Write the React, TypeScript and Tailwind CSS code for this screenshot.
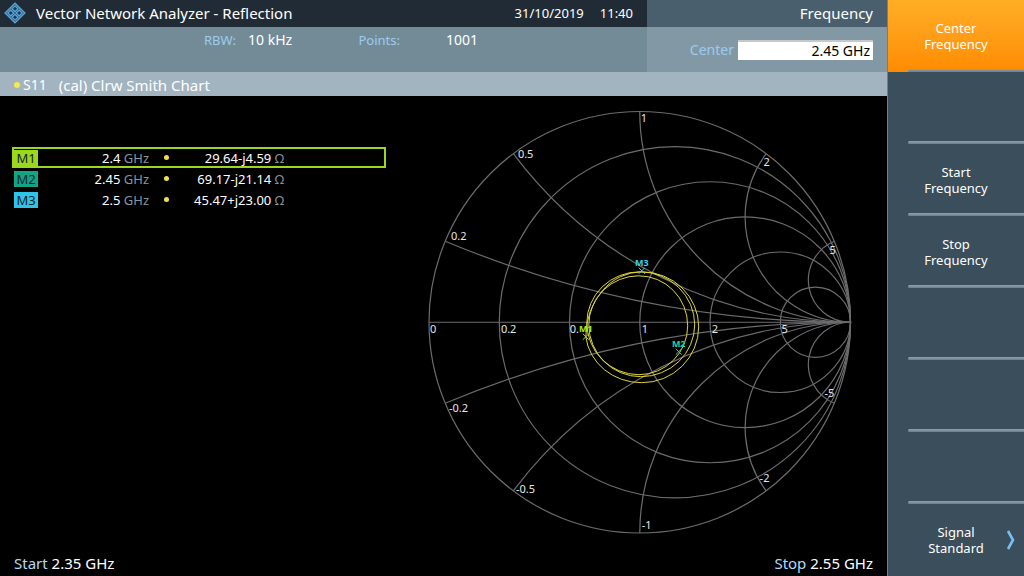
import { useState } from "react";

interface Marker {
  id: string;
  freq: string;
  value: string;
  badge: string;
}

const markers: Marker[] = [
  { id: "M1", freq: "2.4", value: "29.64-j4.59", badge: "bg-[#9bd71c]" },
  { id: "M2", freq: "2.45", value: "69.17-j21.14", badge: "bg-[#12a584]" },
  { id: "M3", freq: "2.5", value: "45.47+j23.00", badge: "bg-[#2fc3e6]" },
];

const softKeys = [
  ["Center", "Frequency"],
  [],
  ["Start", "Frequency"],
  ["Stop", "Frequency"],
  [],
  [],
  [],
  ["Signal", "Standard"],
];

// Smith chart geometry
const CX = 216;
const CY = 222.5;
const R = 211;
const gridValues = [0.2, 0.5, 1, 2, 5];

// constant-reactance arc, from the rim to the open-circuit point
function reactanceArc(x: number) {
  const d = x * x + 1;
  const startX = CX + (R * (x * x - 1)) / d;
  const startY = CY - (R * 2 * x) / d;
  const r = R / Math.abs(x);
  return `M${startX} ${startY}A${r} ${r} 0 0 ${x > 0 ? 0 : 1} ${CX + R} ${CY}`;
}

const chartLabels = [
  { x: 6, y: 233, text: "0" },
  { x: 77, y: 233, text: "0.2" },
  { x: 146, y: 233, text: "0." },
  { x: 218, y: 233, text: "1" },
  { x: 288, y: 233, text: "2" },
  { x: 358, y: 233, text: "5" },
  { x: 27, y: 140, text: "0.2" },
  { x: 94, y: 58, text: "0.5" },
  { x: 217, y: 22, text: "1" },
  { x: 340, y: 66, text: "2" },
  { x: 406, y: 154, text: "5" },
  { x: 25, y: 312, text: "-0.2" },
  { x: 92, y: 393, text: "-0.5" },
  { x: 218, y: 429, text: "-1" },
  { x: 336, y: 382, text: "-2" },
  { x: 401, y: 297, text: "-5" },
];

const chartMarkers = [
  { id: "M1", x: 162, y: 237, color: "#a6e81e" },
  { id: "M2", x: 255, y: 252, color: "#1fd6a0" },
  { id: "M3", x: 218, y: 171, color: "#3fd0ee" },
];

function Logo() {
  return (
    <svg viewBox="0 0 22 22" className="size-[22px]" fill="none">
      <path
        d="M11 1.2 20.8 11 11 20.8 1.2 11Z"
        fill="#1d3a55"
        stroke="#5ba3d6"
        strokeWidth="1.5"
      />
      <g stroke="#5ba3d6" strokeWidth="1.3">
        <path d="M11 3.8 14 6.8 11 9.8 8 6.8Z" />
        <path d="M6.8 8 9.8 11 6.8 14 3.8 11Z" />
        <path d="M15.2 8 18.2 11 15.2 14 12.2 11Z" />
        <path d="M11 12.2 14 15.2 11 18.2 8 15.2Z" />
      </g>
    </svg>
  );
}

function SmithChart() {
  return (
    <svg
      viewBox="0 0 444 444"
      className="mt-1 mr-5 w-1/2 shrink-0 self-start"
      fill="none"
      role="img"
      aria-label="S11 Smith chart"
    >
      <g stroke="#6c6b6e" strokeWidth="1.2">
        <circle cx={CX} cy={CY} r={R} />
        <path d={`M${CX - R} ${CY}H${CX + R}`} />
        {gridValues.map((v) => (
          <circle key={v} cx={CX + (R * v) / (1 + v)} cy={CY} r={R / (1 + v)} />
        ))}
        {gridValues.map((v) => (
          <path key={v} d={reactanceArc(v) + reactanceArc(-v)} />
        ))}
      </g>

      <path
        d="M165 225A50 49 0 0 1 215 176A49 50 0 0 1 264 226A49 49 0 0 1 215 275A52 52 0 0 1 163 223A53 51 0 0 1 216 172A55 53 0 0 1 271 225A54 52 0 0 1 217 277A52 52 0 0 1 165 225M162 237A56 65 0 0 1 218 172A57 55 0 0 1 275 227A57 56 0 0 1 218 283A56 52 0 0 1 162 237"
        stroke="#dcd53c"
        strokeWidth="1"
      />

      <g fill="#e8e8e8" className="text-[11px]">
        {chartLabels.map((l) => (
          <text key={`${l.x}-${l.y}`} x={l.x} y={l.y}>
            {l.text}
          </text>
        ))}
      </g>

      {chartMarkers.map((m) => (
        <g key={m.id}>
          <path
            d={`M${m.x - 3} ${m.y - 3}l6 6m0-6l-6 6`}
            stroke={m.color}
            strokeWidth="1"
          />
          <text
            x={m.x}
            y={m.y - 5}
            textAnchor="middle"
            fill={m.color}
            className="text-[9px] font-bold"
          >
            {m.id}
          </text>
        </g>
      ))}
    </svg>
  );
}

export default function App() {
  const [center, setCenter] = useState("2.45 GHz");
  const [activeKey, setActiveKey] = useState(0);

  return (
    <div className="flex min-h-screen bg-black font-['Noto_Sans',sans-serif] text-[15px] leading-5 text-white">
      <main className="flex min-w-0 flex-1 flex-col border-r border-[#6f808b]">
        <header className="flex">
          <div className="flex-1">
            <div className="flex h-[27px] items-center bg-[#212b35] pr-[14px] pb-[2px] pl-1">
              <Logo />
              <h1 className="ml-[10px] flex-1">
                Vector Network Analyzer - Reflection
              </h1>
              <span className="text-[13px]">31/10/2019</span>
              <span className="ml-4 text-[13px]">11:40</span>
            </div>
            <dl className="grid h-[45px] grid-cols-[236px_60px_80px_1fr] gap-x-3 bg-[#738b97] pt-[3px] text-[13px]">
              <dt className="text-right text-[#9ccbf0]">RBW:</dt>
              <dd className="text-sm whitespace-nowrap">10 kHz</dd>
              <dt className="text-right text-[#9ccbf0]">Points:</dt>
              <dd className="pl-[34px] text-sm">1001</dd>
            </dl>
          </div>
          <div className="w-[240px]">
            <h2 className="flex h-[27px] items-center justify-end bg-[#4a5f6e] pr-[14px] pb-[2px]">
              Frequency
            </h2>
            <div className="flex h-[45px] items-center justify-end bg-[#8298a5] pr-[14px] text-sm">
              <label htmlFor="center" className="mr-1 text-[#9ccbf0]">
                Center
              </label>
              <input
                id="center"
                value={center}
                onChange={(e) => setCenter(e.target.value)}
                className="h-5 w-[135px] border-t-2 border-[#c5c9cc] bg-white pr-[3px] text-right text-black outline-none"
              />
            </div>
          </div>
        </header>

        <div className="flex h-6 items-center bg-[#a2b4c0] pt-px pl-[14px]">
          <span className="size-[6px] rounded-full bg-[#f5ea4a]" />
          <span className="ml-[3px] text-sm">S11</span>
          <span className="ml-3">(cal) Clrw Smith Chart</span>
        </div>

        <section className="flex flex-1">
          <div className="min-w-0 flex-1 pt-[51px] pl-3">
            <table className="w-[374px] border-collapse text-[13px]">
              <tbody>
                {markers.map((m, i) => (
                  <tr
                    key={m.id}
                    className={
                      i === 0
                        ? "h-[21px] outline-2 -outline-offset-2 outline-[#9bd71c]"
                        : "h-[21px]"
                    }
                  >
                    <td className="w-[26px] p-0 pl-[2px]">
                      <span
                        className={`block h-4 w-6 text-center leading-4 text-[#10252c] ${m.badge}`}
                      >
                        {m.id}
                      </span>
                    </td>
                    <td className="w-[111px] p-0 text-right leading-4">
                      {m.freq} <span className="text-[#8795a0]">GHz</span>
                    </td>
                    <td className="w-[35px] p-0">
                      <span className="mx-auto block size-[5px] rounded-full bg-[#f0e050]" />
                    </td>
                    <td className="w-[100px] p-0 text-right leading-4">
                      {m.value} <span className="text-[#8795a0]">Ω</span>
                    </td>
                    <td className="p-0" />
                  </tr>
                ))}
              </tbody>
            </table>
          </div>
          <SmithChart />
        </section>

        <footer className="flex justify-between px-[14px] pb-[3px]">
          <span>
            <span className="text-[#b4d9f5]">Start</span> 2.35 GHz
          </span>
          <span>
            <span className="text-[#b4d9f5]">Stop</span> 2.55 GHz
          </span>
        </footer>
      </main>

      <nav className="flex w-[136px] flex-col bg-[#3a4e5b]">
        {softKeys.map((lines, i) => (
          <button
            key={i}
            aria-label={lines.length ? undefined : "Unassigned key"}
            onClick={() => lines.length && setActiveKey(i)}
            className={`relative flex min-h-[72px] flex-1 flex-col items-center justify-center text-[13px] leading-4 ${
              i === activeKey
                ? "bg-linear-to-b from-[#ffae24] to-[#ff8c00]"
                : ""
            }`}
          >
            {lines.map((line) => (
              <span key={line}>{line}</span>
            ))}
            {i < softKeys.length - 1 ? (
              <span className="absolute right-0 bottom-0 left-5 h-[3px] rounded-l-sm bg-linear-to-b from-[#93a3b0] to-[#6c7e8b]" />
            ) : (
              <svg
                viewBox="0 0 10 20"
                className="absolute right-2 h-5 w-[10px]"
                fill="none"
                stroke="#78c0f2"
                strokeWidth="2.6"
              >
                <path d="M2 1 7 10 2 19" />
              </svg>
            )}
          </button>
        ))}
      </nav>
    </div>
  );
}
